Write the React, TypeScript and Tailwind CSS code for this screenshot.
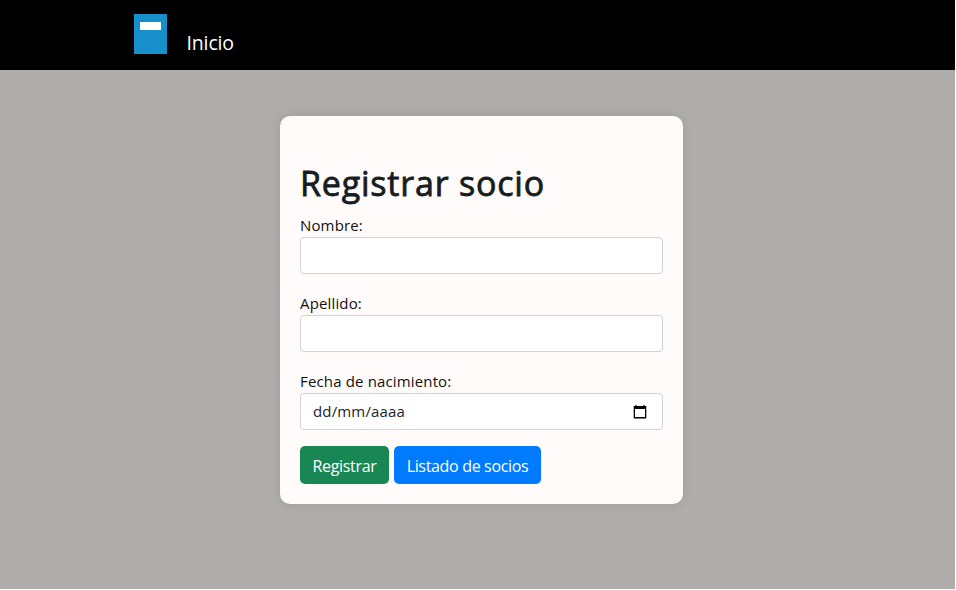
const field = "block w-full h-[37px] rounded-[4px] border border-[#ced4da] bg-white px-3 outline-none";
const label = "block h-[23px] whitespace-nowrap text-[15px] leading-[22px] tracking-[0.15px]";

export default function App() {
  return (
    <div className="h-[589px] w-[955px] overflow-hidden bg-[#aeadab] font-['Open_Sans','Noto_Sans',sans-serif] text-[#111111]">
      <nav className="flex h-[70px] items-start bg-black pl-[134px]">
        <svg className="mt-[14px]" width="33" height="40" viewBox="0 0 33 40">
          <rect width="33" height="40" fill="#168fca" />
          <rect x="6" y="8" width="21" height="8" fill="#fff" />
        </svg>
        <a className="ml-[19.5px] mt-[28px] text-[19.5px] leading-[30px] tracking-[-0.15px] text-white">Inicio</a>
      </nav>
      <main className="ml-[280px] mt-[46px] h-[388px] w-[403px] rounded-[10px] bg-[#fffbfa] px-5 pt-[44px] shadow-[0_0_10px_rgba(0,0,0,0.1)]">
        <h1 className="h-[54px] whitespace-nowrap text-[34px] font-normal leading-[47px] tracking-[0.8px] text-[#161d1f] [-webkit-text-stroke:0.8px_#161d1f]">Registrar socio</h1>
        <label className={label}>Nombre:</label>
        <div className={field} />
        <label className={`mt-[18px] ${label}`}>Apellido:</label>
        <div className={field} />
        <label className={`mt-[18px] ${label}`}>Fecha de nacimiento:</label>
        <div className="flex h-[37px] w-full items-center justify-between rounded-[4px] border border-[#ced4da] bg-white pl-3 pr-[15px] text-[15px] tracking-[0.15px] text-[#212529]">
          <span>dd/mm/aaaa</span>
          <svg width="14" height="14" viewBox="0 0 14 14"><path fill="#000" fillRule="evenodd" d="M2.5 0h1.2v1h6.6V0h1.2v1h1.8v12.4H.7V1h1.8zM2 4v8h10V4z" /></svg>
        </div>
        <div className="mt-4 flex gap-[5px] text-[16px] tracking-[-0.33px] text-white">
          <button className="h-[38px] w-[89px] whitespace-nowrap rounded-[5px] bg-[#198754] pt-[2px]">Registrar</button>
          <button className="h-[38px] w-[147px] whitespace-nowrap rounded-[5px] bg-[#007bff] pt-[2px]">Listado de socios</button>
        </div>
      </main>
    </div>
  );
}
